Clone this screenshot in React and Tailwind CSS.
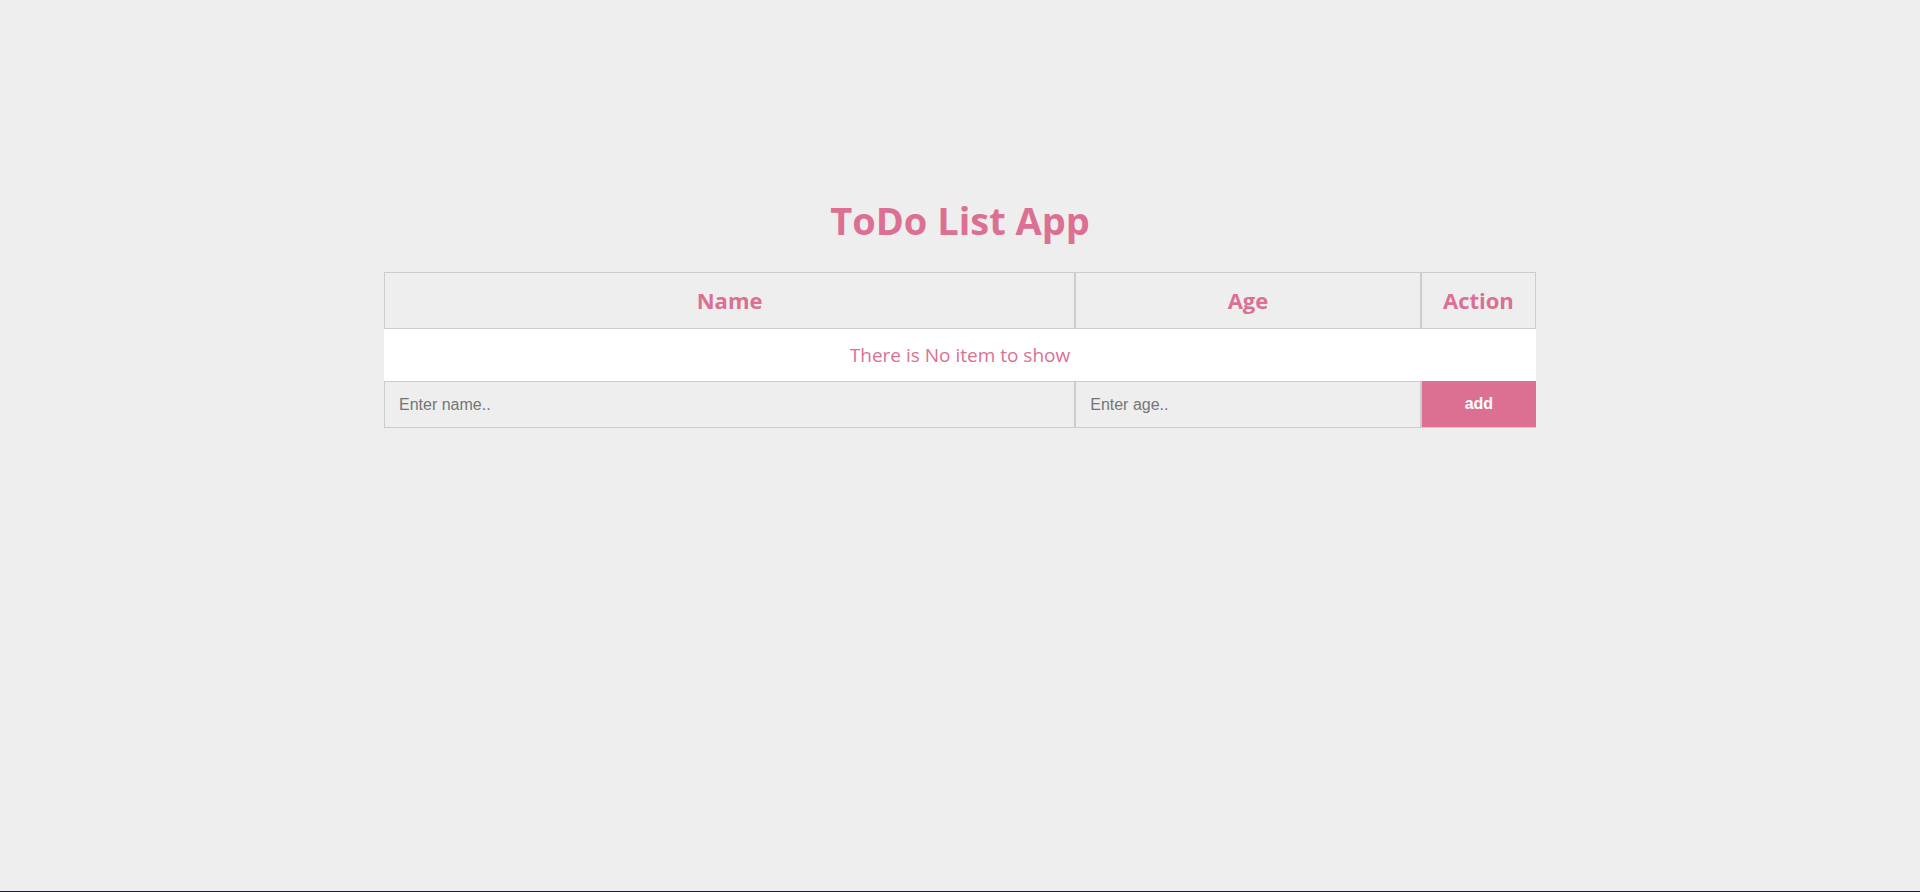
import React, { useState } from "react";

const pink = "text-[#db7093]";

export default function App() {
  const [items, setItems] = useState([]);
  const [name, setName] = useState("");
  const [age, setAge] = useState("");

  const add = () => {
    if (!name.trim()) return;
    setItems([...items, { name, age }]);
    setName("");
    setAge("");
  };

  return (
    <div className="h-[892px] flex flex-col bg-[#eeeeee]">
      <div className="flex-1 flex flex-col items-center pt-[200px]">
        <h1
          className={`text-[38px] leading-[40px] font-bold ${pink} font-['Open_Sans',sans-serif]`}
        >
          ToDo List App
        </h1>

        <table className="mt-[32px] w-[1152px] table-fixed border-separate border-spacing-0">
          <colgroup>
            <col className="w-[60%]" />
            <col className="w-[30%]" />
            <col className="w-[10%]" />
          </colgroup>
          <thead>
            <tr className="h-[57px]">
              {["Name", "Age", "Action"].map((h) => (
                <th
                  key={h}
                  className={`border border-[#cccccc] text-[22px] font-bold ${pink} font-['Open_Sans',sans-serif] p-0`}
                >
                  {h}
                </th>
              ))}
            </tr>
          </thead>
          <tbody>
            {items.length === 0 ? (
              <tr className="h-[52px] bg-white">
                <td
                  colSpan={3}
                  className={`text-center text-[19px] ${pink} font-['Open_Sans',sans-serif] p-0`}
                >
                  There is No item to show
                </td>
              </tr>
            ) : (
              items.map((it, i) => (
                <tr key={i} className="h-[52px] bg-white">
                  <td className={`text-center text-[19px] ${pink} font-['Open_Sans',sans-serif]`}>{it.name}</td>
                  <td className={`text-center text-[19px] ${pink} font-['Open_Sans',sans-serif]`}>{it.age}</td>
                  <td className={`text-center text-[19px] ${pink} font-['Open_Sans',sans-serif]`}>
                    <button onClick={() => setItems(items.filter((_, j) => j !== i))}>delete</button>
                  </td>
                </tr>
              ))
            )}
            <tr className="h-[47px]">
              <td className="p-0 h-[47px]">
                <input
                  value={name}
                  onChange={(e) => setName(e.target.value)}
                  placeholder="Enter name.."
                  className="w-full h-[47px] border border-[#cccccc] bg-[#eeeeee] pl-[14px] text-[16px] font-['Liberation_Sans',Arial,sans-serif] text-[#333] placeholder:text-[#757575] outline-none"
                />
              </td>
              <td className="p-0 h-[47px]">
                <input
                  value={age}
                  onChange={(e) => setAge(e.target.value)}
                  placeholder="Enter age.."
                  className="w-full h-[47px] border border-[#cccccc] bg-[#eeeeee] pl-[14px] text-[16px] font-['Liberation_Sans',Arial,sans-serif] text-[#333] placeholder:text-[#757575] outline-none"
                />
              </td>
              <td className="p-0 h-[47px]">
                <button
                  onClick={add}
                  className="w-full h-[47px] bg-[#db7093] border-l border-b border-[#cccccc] text-white font-bold text-[16px] font-['Liberation_Sans',Arial,sans-serif]"
                >
                  add
                </button>
              </td>
            </tr>
          </tbody>
        </table>
      </div>
      <div className="h-px bg-[#1c1d2e]" />
    </div>
  );
}
